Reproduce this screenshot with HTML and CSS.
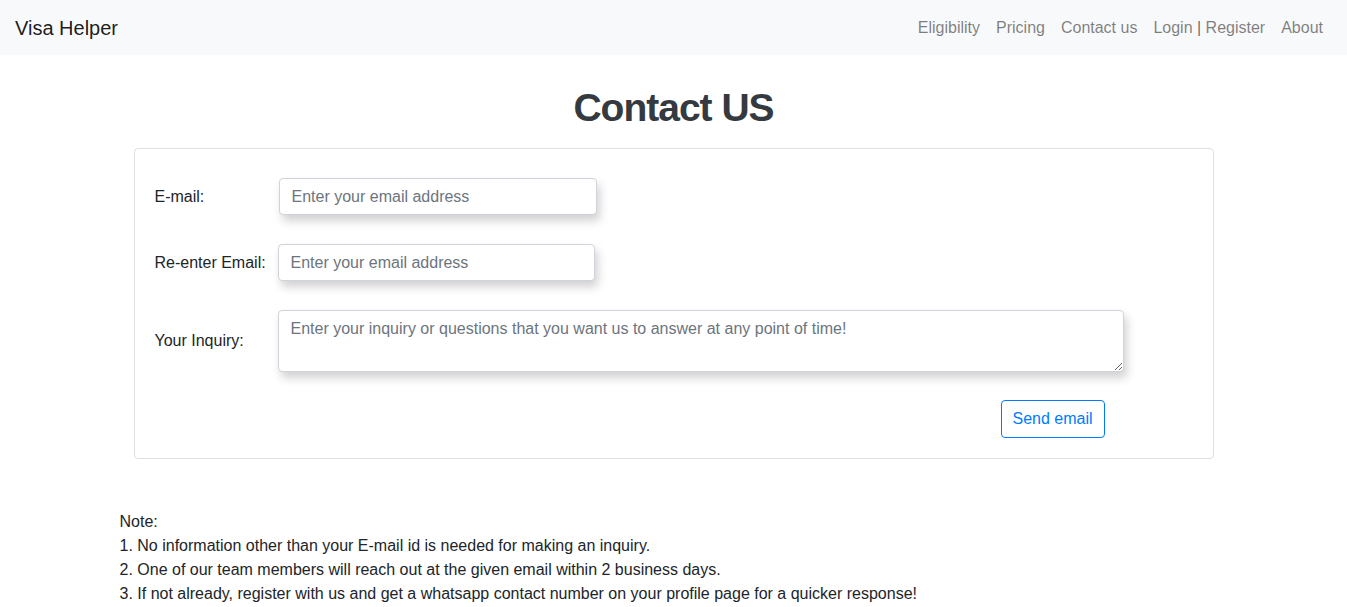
FILE: index.html
```html
<!DOCTYPE html>
<html lang="en">
<head>
<meta charset="utf-8">
<title>Contact US - Visa Helper</title>
<link rel="stylesheet" href="styles.css">
</head>
<body>
<nav class="navbar">
  <a class="brand" href="#">Visa Helper</a>
  <ul class="nav-links">
    <li><a href="#">Eligibility</a></li>
    <li><a href="#">Pricing</a></li>
    <li><a href="#">Contact us</a></li>
    <li><a href="#">Login</a><span class="sep"> | </span><a href="#">Register</a></li>
    <li><a href="#">About</a></li>
  </ul>
</nav>
<main class="container">
  <h1 class="title">Contact US</h1>
  <div class="card">
    <form class="form">
      <div class="form-row row-1">
        <label class="label" for="email">E-mail:</label>
        <input class="input input-email" id="email" type="email" placeholder="Enter your email address">
      </div>
      <div class="form-row">
        <label class="label" for="email2">Re-enter Email:</label>
        <input class="input input-email2" id="email2" type="email" placeholder="Enter your email address">
      </div>
      <div class="form-row">
        <label class="label" for="inquiry">Your Inquiry:</label>
        <textarea class="input textarea" id="inquiry" placeholder="Enter your inquiry or questions that you want us to answer at any point of time!"></textarea>
      </div>
      <div class="actions">
        <button class="btn" type="button">Send email</button>
      </div>
    </form>
  </div>
  <div class="note">
    <p>Note:</p>
    <p>1. No information other than your E-mail id is needed for making an inquiry.</p>
    <p>2. One of our team members will reach out at the given email within 2 business days.</p>
    <p>3. If not already, register with us and get a whatsapp contact number on your profile page for a quicker response!</p>
  </div>
</main>
</body>
</html>
```
FILE: styles.css
```css
* { box-sizing: border-box; }
html, body {
  margin: 0;
  padding: 0;
  font-family: "Segoe UI", "Liberation Sans", Arial, sans-serif;
  font-size: 16px;
  line-height: 1.5;
  color: #212529;
  background: #fff;
}
.navbar {
  display: flex;
  align-items: center;
  justify-content: space-between;
  height: 55px;
  padding: 0 16px 0 15px;
  background: #f8f9fa;
}
.brand {
  font-size: 20px;
  color: rgba(0,0,0,.9);
  text-decoration: none;
}
.nav-links {
  display: flex;
  list-style: none;
  margin: 0;
  padding: 0;
}
.nav-links li {
  padding: 0 8px;
  color: rgba(0,0,0,.5);
}
.nav-links a {
  color: rgba(0,0,0,.5);
  text-decoration: none;
}
.sep { color: rgba(0,0,0,.6); }
.container {
  width: 1110px;
  margin: 0 auto;
}
.title {
  margin: 29px 0 16px;
  text-align: center;
  font-size: 39px;
  font-weight: 600;
  letter-spacing: -1px;
  line-height: 48px;
  color: #343a40;
}
.card {
  margin: 0 15px;
  border: 1px solid rgba(0,0,0,.125);
  border-radius: 4px;
  padding: 29px 20px 20px;
}
.form {
  display: flex;
  flex-direction: column;
  gap: 29px;
}
.form-row {
  display: flex;
  align-items: center;
}
.label {
  width: 123px;
  flex: none;
}
.row-1 .label { width: 124px; }
.input {
  font: inherit;
  font-size: 16px;
  color: #495057;
  height: 37px;
  padding: 6px 12px;
  border: 1px solid #ced4da;
  border-radius: 4px;
  background: #fff;
  box-shadow: 3px 6px 10px rgba(0,0,0,.18);
}
.input::placeholder { color: #6c757d; }
.input-email { width: 318px; }
.input-email2 { width: 317px; }
.textarea {
  width: 846px;
  height: 62px;
  resize: vertical;
}
.actions {
  display: flex;
  justify-content: flex-end;
  padding-right: 88px;
  margin-top: -1px;
}
.btn {
  font: inherit;
  font-size: 16px;
  color: #007bff;
  background: transparent;
  border: 1px solid #007bff;
  border-radius: 4px;
  width: 104px;
  height: 38px;
  padding: 0;
  cursor: pointer;
}
.note {
  margin-top: 51px;
  padding-left: 1px;
}
.note p {
  margin: 0;
  line-height: 24px;
}
```
